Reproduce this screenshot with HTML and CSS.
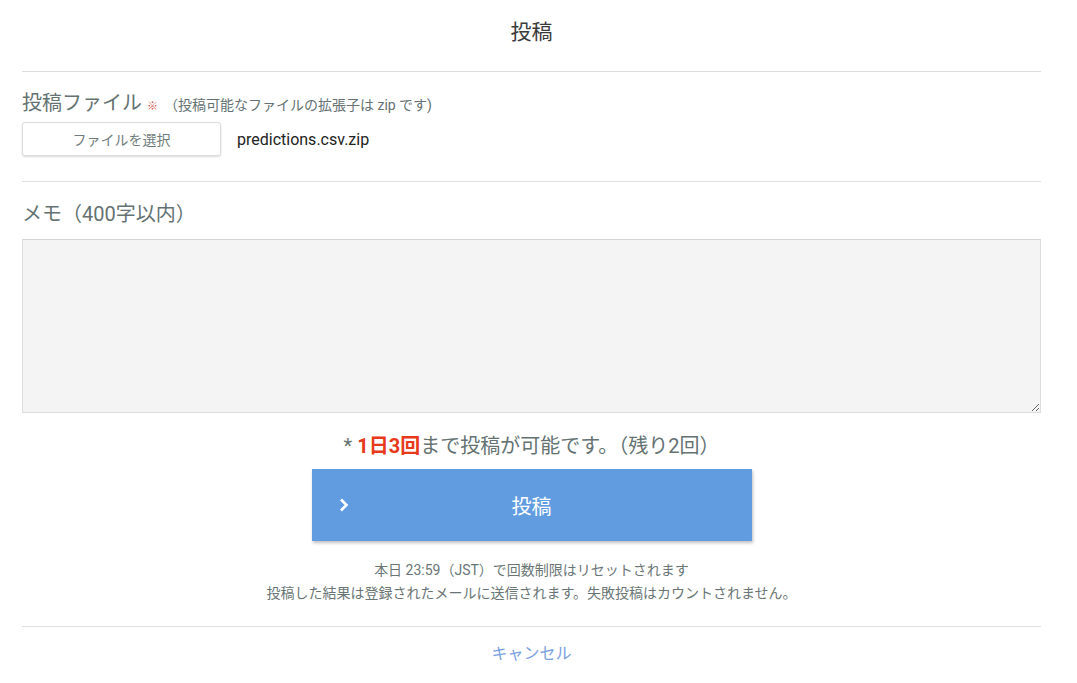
FILE: index.html
```html
<!DOCTYPE html>
<html lang="ja">
<head>
    <meta charset="UTF-8">
    <title>投稿</title>
    <link rel="stylesheet" href="styles.css">
</head>
<body>
    <div class="modal">
        <h1 class="modal-title">投稿</h1>

        <div class="section">
            <div class="label">投稿ファイル <span class="required">※</span><span class="note">（投稿可能なファイルの拡張子は zip です)</span></div>
            <div class="file-row">
                <button class="file-btn">ファイルを選択</button>
                <span class="file-name">predictions.csv.zip</span>
            </div>
        </div>

        <div class="section memo">
            <div class="label">メモ（400字以内）</div>
            <textarea class="memo-input"></textarea>
        </div>

        <p class="limit">* <strong>1日3回</strong>まで投稿が可能です。（残り2回）</p>

        <button class="submit-btn">
            <svg class="chevron" width="12" height="16" viewBox="0 0 12 16"><path d="M3 2.5 L8.5 8 L3 13.5" fill="none" stroke="#fff" stroke-width="2.6"/></svg>
            <span>投稿</span>
        </button>

        <div class="info">
            <p>本日 23:59（JST）で回数制限はリセットされます</p>
            <p>投稿した結果は登録されたメールに送信されます。失敗投稿はカウントされません。</p>
        </div>

        <div class="footer">
            <a href="#" class="cancel">キャンセル</a>
        </div>
    </div>
</body>
</html>
```

FILE: styles.css
```css
* {
    margin: 0;
    padding: 0;
    box-sizing: border-box;
}

body {
    font-family: Roboto, "Noto Sans CJK JP", sans-serif;
    background: #fff;
    color: #647272;
}

.modal {
    margin: 0 36px 0 22px;
}

.modal-title {
    font-size: 21px;
    font-weight: 400;
    color: #3a3a3a;
    text-align: center;
    height: 72px;
    line-height: 64px;
    border-bottom: 1px solid #ddd;
}

.section {
    padding-top: 18px;
    padding-bottom: 25px;
    border-bottom: 1px solid #ddd;
}

.label {
    font-size: 20px;
    line-height: 26px;
}

.required {
    color: #d9534f;
    font-size: 11px;
    margin-right: 6px;
}

.note {
    font-size: 14px;
}

.file-row {
    display: flex;
    align-items: center;
    gap: 16px;
    margin-top: 2px;
}

.file-btn {
    width: 199px;
    height: 34px;
    background: #fff;
    border: 1px solid #ddd;
    border-radius: 3px;
    box-shadow: 0 1px 2px rgba(0, 0, 0, 0.15);
    font-family: inherit;
    font-size: 14px;
    color: #6f7c7c;
}

.file-name {
    font-size: 16px;
    color: #222;
}

.memo {
    padding-top: 19px;
    border-bottom: none;
    padding-bottom: 0;
}

.memo-input {
    display: block;
    width: 100%;
    height: 174px;
    margin-top: 12px;
    background: #f4f4f4;
    border: 1px solid #ddd;
    border-top-color: #d4d4d4;
    resize: vertical;
}

.limit {
    text-align: center;
    font-size: 20px;
    margin-top: 20px;
    line-height: 26px;
}

.limit strong {
    color: #e8391a;
    font-weight: 700;
}

.submit-btn {
    display: flex;
    align-items: center;
    width: 440px;
    height: 72px;
    margin: 10px auto 0;
    padding: 0 26px;
    border: none;
    background: #629ce0;
    color: #fff;
    font-family: inherit;
    font-size: 20px;
    box-shadow: 1px 2px 3px rgba(0, 0, 0, 0.25);
    cursor: pointer;
}

.submit-btn span {
    flex: 1;
    text-align: center;
    margin-right: 12px;
}

.info {
    text-align: center;
    font-size: 14px;
    line-height: 23px;
    margin-top: 18px;
    padding-bottom: 21px;
    border-bottom: 1px solid #ddd;
    color: #6a7676;
}

.footer {
    text-align: center;
    padding-top: 13px;
}

.cancel {
    font-size: 16px;
    color: #7a9fe0;
    text-decoration: none;
}
```
